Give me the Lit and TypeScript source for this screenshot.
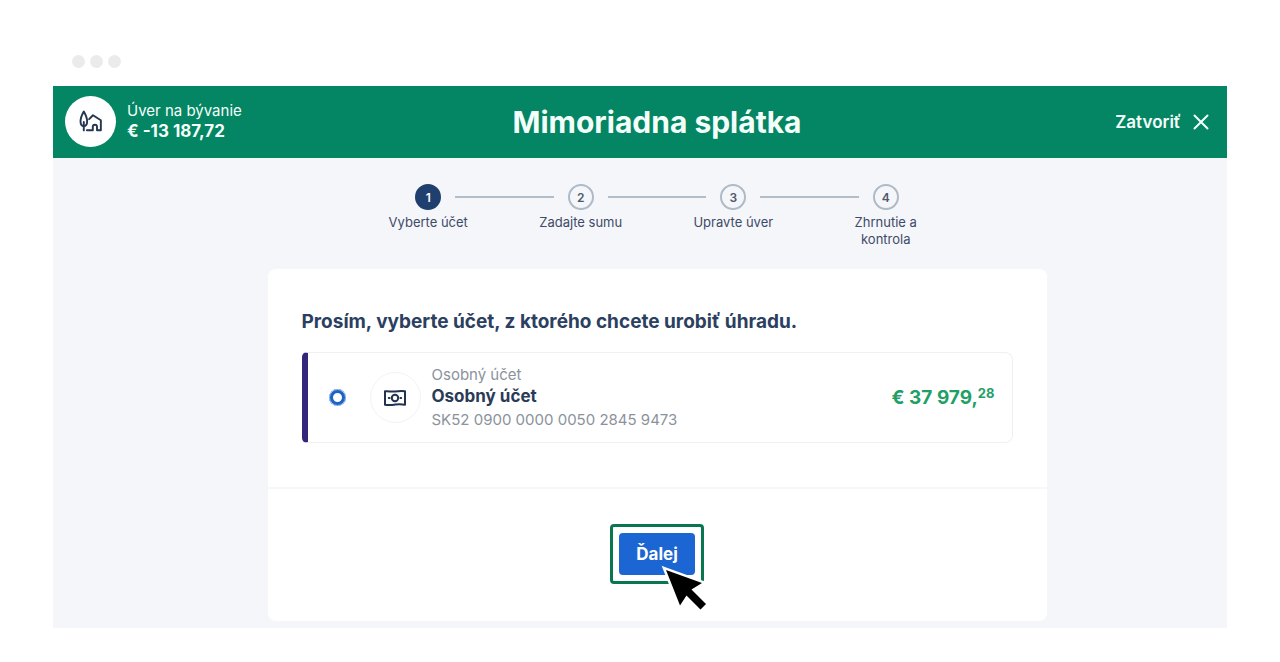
import { LitElement, html, css, svg } from "lit";
import { customElement, property, state } from "lit/decorators.js";

const houseIcon = svg`
  <svg viewBox="0 0 26 24" width="25" height="23" fill="none" stroke="#25364f" stroke-width="2" stroke-linecap="round" stroke-linejoin="round" aria-hidden="true">
    <path d="M6 1.600C4.300 4.600 2.600 8.600 2.600 11.800c0 3.100 1.200 5 3.400 5s3.500-1.900 3.500-5C9.500 8.600 7.700 4.600 6 1.600Z"/>
    <path d="M6 12.500v8.800"/>
    <path d="M11.600 9.600l4-4.100 8.200 5.200v10.500h-4v-3.600c0-1.500-.8-2.200-2.200-2.200s-2.200.8-2.200 2.200v3.600H9.200"/>
  </svg>`;

const closeIcon = svg`
  <svg viewBox="0 0 16 16" width="16" height="16" fill="none" stroke="currentColor" stroke-width="2" stroke-linecap="round" aria-hidden="true">
    <path d="M1.500 1.500l13 13M14.500 1.500l-13 13"/>
  </svg>`;

const cashIcon = svg`
  <svg viewBox="0 0 24 18" width="24" height="18" fill="none" stroke="#22334f" stroke-width="2" stroke-linejoin="round" aria-hidden="true">
    <path d="M2 2.300c3.500-.4 6.500.6 10 .2s6.500-.7 10-.2v13.400c-3.500-.5-6.500-.5-10-.1s-6.500.8-10 .1Z"/>
    <circle cx="12" cy="9" r="3.200"/>
    <path d="M5.800 9h.8M17.400 9h.8" stroke-linecap="round"/>
  </svg>`;

const pointer = svg`
  <svg class="pointer" viewBox="0 0 46 46" width="46" height="46" aria-hidden="true">
    <path d="M5 5L41 18L30.500 24.500L45 39L39.500 44.500L25.500 30.500L19 40.500Z" fill="#fff" stroke="#fff" stroke-width="5"/>
    <path d="M5 5L41 18L30.500 24.500L45 39L39.500 44.500L25.500 30.500L19 40.500Z" fill="#000"/>
  </svg>`;

@customElement("step-list")
class StepList extends LitElement {
  @property({ type: Array }) steps: string[] = [];
  @property({ type: Number }) current = 1;

  static styles = css`
    :host { display: block; }
    .steps {
      display: grid;
      grid-template-columns: repeat(4, 1fr);
      max-width: 610px;
      margin: 0 auto;
      padding: 0;
      list-style: none;
    }
    .step { display: flex; flex-direction: column; align-items: center; gap: 4px; }
    .track { display: flex; align-items: center; gap: 14px; width: 100%; }
    .line { flex: 1; height: 2px; background: #b2bfcb; }
    .step:first-child .line:first-child,
    .step:last-child .line:last-child { background: transparent; }
    .dot {
      box-sizing: border-box;
      width: 26px;
      height: 26px;
      border: 2px solid #aebac6;
      border-radius: 50%;
      display: grid;
      place-items: center;
      font-size: 12px;
      font-weight: 600;
      color: #4c586c;
    }
    .current .dot { background: #1f3f6e; border-color: #1f3f6e; color: #fff; }
    .label {
      max-width: 84px;
      text-align: center;
      font-size: 13px;
      line-height: 17px;
      color: #3f4a67;
    }
  `;

  render() {
    return html`<ol class="steps">
      ${this.steps.map(
        (label, i) => html`<li class="step ${i + 1 === this.current ? "current" : ""}">
          <div class="track">
            <span class="line"></span><span class="dot">${i + 1}</span><span class="line"></span>
          </div>
          <span class="label">${label}</span>
        </li>`
      )}
    </ol>`;
  }
}

@customElement("app-root")
class AppRoot extends LitElement {
  @state() private account = "SK52";

  static styles = css`
    :host {
      display: block;
      box-sizing: border-box;
      min-height: 100vh;
      padding: 55px 53px 34px;
      background: #fff;
      font-family: Inter, "Liberation Sans", sans-serif;
    }
    .dots { display: flex; gap: 5px; padding: 0 19px; height: 31px; }
    .dots span { width: 13px; height: 13px; border-radius: 50%; background: #ebebeb; }
    .bar {
      display: grid;
      grid-template-columns: 1fr auto 1fr;
      align-items: center;
      height: 72px;
      padding: 0 18px 0 12px;
      background: #048563;
      color: #f4fffb;
    }
    .loan { display: flex; align-items: center; gap: 11px; padding-bottom: 2px; }
    .loan-icon {
      display: grid;
      place-items: center;
      width: 51px;
      height: 51px;
      border-radius: 50%;
      background: #fff;
    }
    .loan-text { display: flex; flex-direction: column; font-size: 15px; line-height: 20px; }
    .loan-text strong { font-weight: 700; font-size: 17px; }
    .title { margin: 0; padding-left: 40px; font-size: 30px; line-height: 36px; font-weight: 700; }
    .close {
      justify-self: end;
      display: flex;
      align-items: center;
      gap: 12px;
      padding: 0;
      border: 0;
      background: none;
      color: inherit;
      font: inherit;
      font-size: 17px;
      font-weight: 600;
    }
    .page { padding: 26px 0 7px 34px; background: #f4f6fa; }
    .card {
      max-width: 779px;
      margin: 21px auto 0;
      border-radius: 8px;
      background: #fff;
    }
    .choice { margin: 0; padding: 0 34px 44px; border: 0; min-width: 0; }
    .question {
      padding: 41px 0 18px;
      font-size: 19px;
      line-height: 24px;
      font-weight: 700;
      color: #2b4061;
    }
    .account {
      display: flex;
      align-items: center;
      min-height: 89px;
      padding-right: 17px;
      border: 1px solid #eff0f2;
      border-left: 6px solid #35267c;
      border-radius: 5px 8px 8px 5px;
    }
    .radio {
      appearance: none;
      box-sizing: border-box;
      width: 17px;
      height: 17px;
      margin: 0 24px 0 21px;
      border: 4px solid #1d62c4;
      border-radius: 50%;
      background: #fff;
      outline: 1px solid #a9c8ee;
      outline-offset: -1px;
    }
    .account-icon {
      box-sizing: border-box;
      display: grid;
      place-items: center;
      width: 51px;
      height: 51px;
      border: 1px solid #f3f3f5;
      border-radius: 50%;
    }
    .details { flex: 1; display: flex; flex-direction: column; padding-left: 11px; font-size: 15px; line-height: 23px; color: #8b929c; }
    .details strong { font-size: 17px; font-weight: 700; line-height: 21px; color: #2a3b57; }
    .details .iban { line-height: 25px; }
    .amount { font-size: 19px; font-weight: 700; line-height: 24px; color: #1fa067; }
    .amount sup { font-size: 13px; line-height: 0; vertical-align: 6px; }
    .actions {
      display: flex;
      justify-content: center;
      padding: 35px 0 37px;
      border-top: 2px solid #f6f7f9;
    }
    .focus { position: relative; padding: 6px; border: 3px solid #087750; border-radius: 4px; }
    .next {
      display: block;
      height: 42px;
      padding: 0 17px;
      border: 0;
      border-radius: 4px;
      background: #1c66d3;
      color: #fff;
      font: inherit;
      font-size: 17px;
      font-weight: 700;
    }
    .pointer { position: absolute; left: 48px; top: 38px; }
  `;

  private select(e: Event) {
    this.account = (e.target as HTMLInputElement).value;
  }

  render() {
    return html`
      <div class="dots"><span></span><span></span><span></span></div>
      <header class="bar">
        <div class="loan">
          <span class="loan-icon">${houseIcon}</span>
          <div class="loan-text"><span>Úver na bývanie</span><strong>€ -13 187,72</strong></div>
        </div>
        <h1 class="title">Mimoriadna splátka</h1>
        <button class="close" type="button">Zatvoriť ${closeIcon}</button>
      </header>
      <main class="page">
        <step-list .steps=${["Vyberte účet", "Zadajte sumu", "Upravte úver", "Zhrnutie a kontrola"]} .current=${1}></step-list>
        <form class="card" @submit=${(e: Event) => e.preventDefault()}>
          <fieldset class="choice">
            <legend class="question">Prosím, vyberte účet, z ktorého chcete urobiť úhradu.</legend>
            <label class="account">
              <input class="radio" type="radio" name="account" value="SK52" .checked=${this.account === "SK52"} @change=${this.select} />
              <span class="account-icon">${cashIcon}</span>
              <span class="details">
                <span>Osobný účet</span>
                <strong>Osobný účet</strong>
                <span class="iban">SK52 0900 0000 0050 2845 9473</span>
              </span>
              <span class="amount">€ 37 979,<sup>28</sup></span>
            </label>
          </fieldset>
          <div class="actions">
            <div class="focus">
              <button class="next" type="submit">Ďalej</button>
              ${pointer}
            </div>
          </div>
        </form>
      </main>
    `;
  }
}
